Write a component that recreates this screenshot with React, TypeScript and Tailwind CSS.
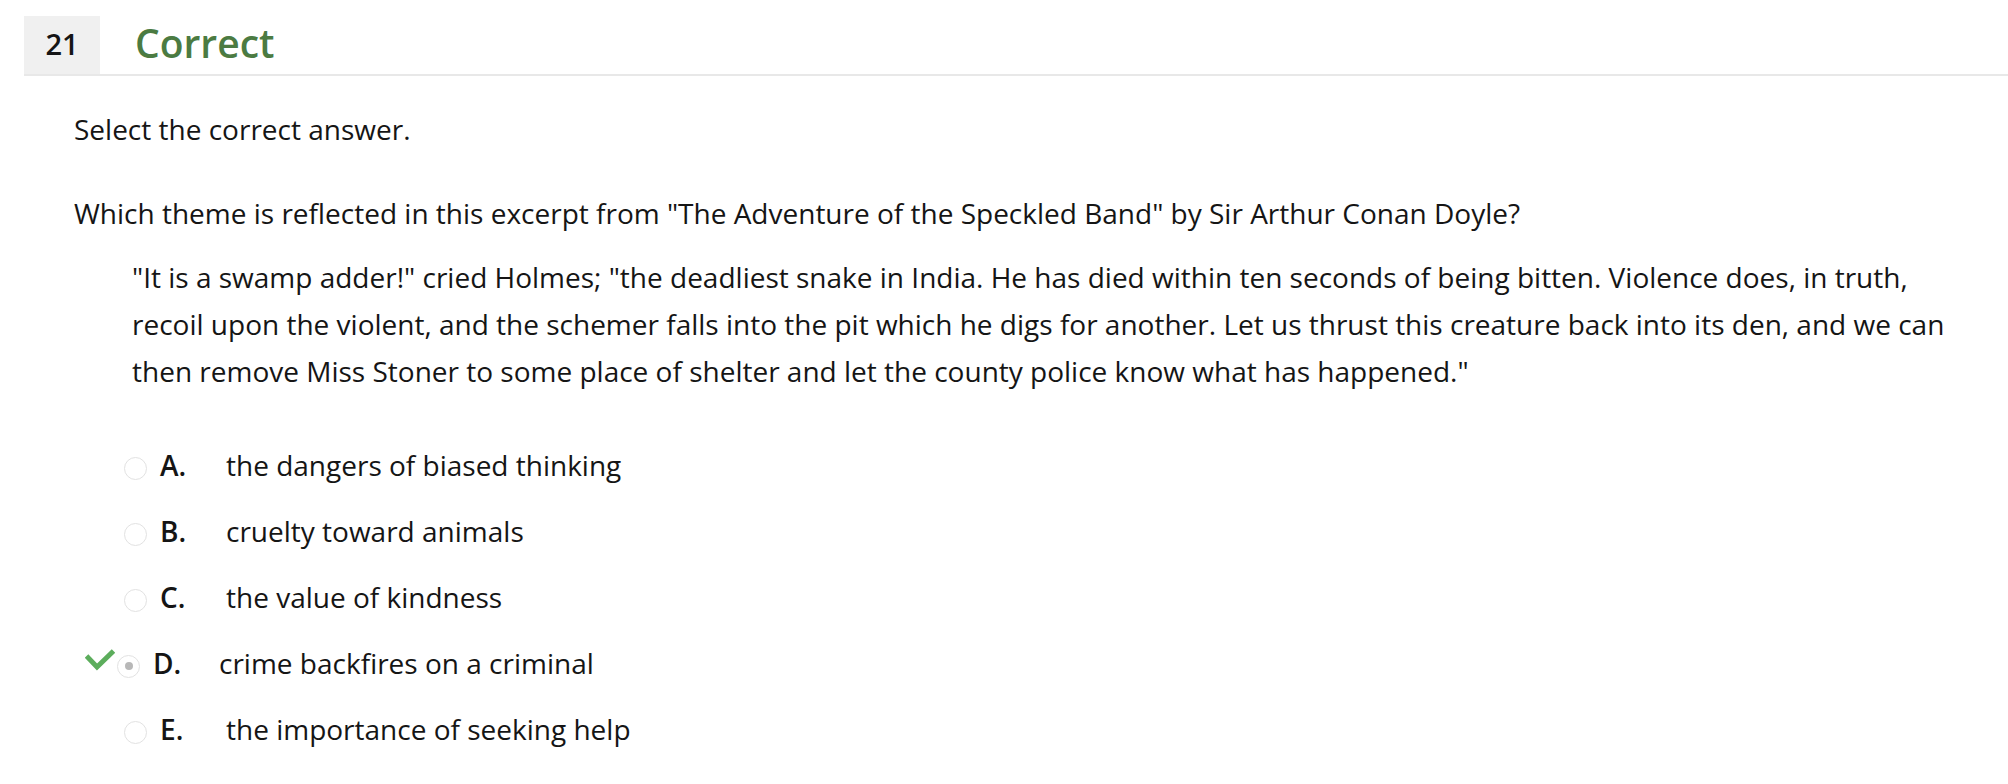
const passage =
  '"It is a swamp adder!" cried Holmes; "the deadliest snake in India. He has died within ten seconds of being bitten. Violence does, in truth, recoil upon the violent, and the schemer falls into the pit which he digs for another. Let us thrust this creature back into its den, and we can then remove Miss Stoner to some place of shelter and let the county police know what has happened."';

const options = [
  { letter: 'A.', text: 'the dangers of biased thinking' },
  { letter: 'B.', text: 'cruelty toward animals' },
  { letter: 'C.', text: 'the value of kindness' },
  { letter: 'D.', text: 'crime backfires on a criminal', selected: true },
  { letter: 'E.', text: 'the importance of seeking help' },
];

function CheckMark() {
  return (
    <svg width="30" height="22" viewBox="0 0 30 22" className="mr-[2px] mb-[6px]">
      <path d="M1.5 7 L12 18 L28.5 2" fill="none" stroke="#5cad5c" strokeWidth="5" />
    </svg>
  );
}

export default function App() {
  return (
    <div className="min-h-[784px] bg-white font-['Open_Sans',sans-serif] text-[#151515]">
      <div className="pt-4 pl-6">
        {/* header */}
        <div className="flex h-[60px] border-b-[2px] border-[#e8e8e8]">
          <div className="flex w-[76px] items-center justify-center bg-[#f0f0f0] pb-[4px] text-[29px] leading-none font-semibold">
            21
          </div>
          <div className="flex items-center pb-[6px] pl-[35px] text-[39px] leading-none font-semibold text-[#4b7b42]">
            Correct
          </div>
        </div>

        {/* question */}
        <div className="pl-[50px] pr-[46px] text-[28px]">
          <p className="mt-[33px] leading-[40px]">Select the correct answer.</p>
          <p className="mt-[44px] leading-[40px]">
            Which theme is reflected in this excerpt from "The Adventure of the Speckled Band" by Sir Arthur Conan Doyle?
          </p>
          <p className="mt-[21px] pl-[58px] leading-[47px]">{passage}</p>

          <div className="mt-[37px]">
            {options.map((o) => (
              <div
                key={o.letter}
                className={`flex h-[66px] items-center ${o.selected ? 'pl-[11px]' : 'pl-[50px]'}`}
              >
                {o.selected && <CheckMark />}
                <span className="mt-[6px] flex h-[23px] w-[23px] items-center justify-center rounded-full border border-[#e2e2e2] bg-white">
                  {o.selected && <span className="h-[8px] w-[8px] rounded-full bg-[#b8b8b8]" />}
                </span>
                <span className="ml-[13px] w-[66px] font-semibold">{o.letter}</span>
                <span>{o.text}</span>
              </div>
            ))}
          </div>
        </div>
      </div>
    </div>
  );
}
